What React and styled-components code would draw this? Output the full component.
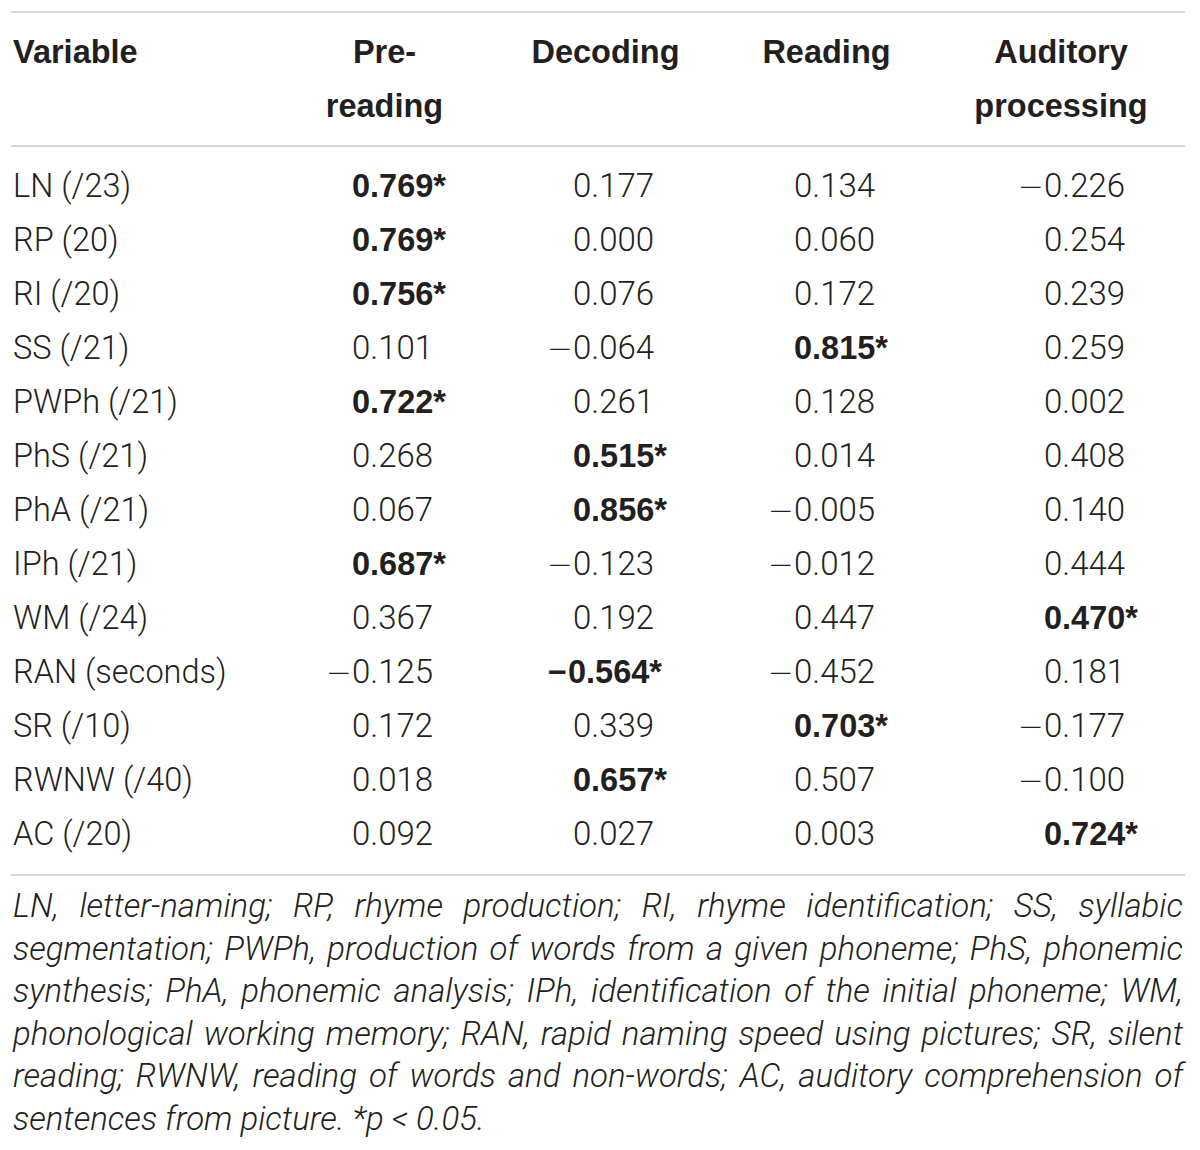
import React from "react";
import styled, { createGlobalStyle } from "styled-components";

const GlobalStyle = createGlobalStyle`
  html, body { margin: 0; padding: 0; background: #ffffff; }
  body { font-family: "Roboto", "Liberation Sans", sans-serif; color: #231f20; }
`;

const Page = styled.div`
  width: 1174px;
  padding: 11px 15px 0 11px;
`;

const Grid = styled.div`
  display: grid;
  grid-template-columns: 263px 221px 221px 221px 248px;
`;

const Header = styled(Grid)`
  border-top: 2px solid #d6d6d6;
  border-bottom: 2px solid #d6d6d6;
  padding: 12px 0 12px;
`;

const HeadCell = styled.div`
  font-family: "Liberation Sans", Arial, sans-serif;
  font-weight: 700;
  font-size: 32.5px;
  line-height: 54px;
  text-align: ${(p) => (p.$left ? "left" : "center")};
  padding-left: ${(p) => (p.$left ? "2px" : "0")};
`;

const Body = styled.div`
  padding: 12px 0 13px;
  border-bottom: 2px solid #d6d6d6;
`;

const Row = styled(Grid)`
  height: 54px;
  align-items: center;
`;

const NameCell = styled.div`
  font-weight: 300;
  font-size: 32.5px;
  line-height: 54px;
  padding-left: 2px;
  white-space: nowrap;
`;

const NumCell = styled.div`
  display: flex;
  align-items: baseline;
  font-size: ${(p) => (p.$bold ? "32.5px" : "33px")};
  line-height: 54px;
  padding-left: ${(p) => p.$pad}px;
  font-weight: ${(p) => (p.$bold ? 700 : 300)};
  font-family: ${(p) =>
    p.$bold ? `"Liberation Sans", Arial, sans-serif` : `"Roboto", "Liberation Sans", sans-serif`};
  white-space: nowrap;
`;

const Sign = styled.span`
  display: inline-block;
  width: ${(p) => (p.$bold && p.$neg ? "20px" : "24px")};
  text-align: left;
  font-family: ${(p) =>
    p.$bold ? `"Liberation Sans", Arial, sans-serif` : `"DejaVu Sans", sans-serif`};
  font-weight: ${(p) => (p.$bold ? 700 : 200)};
  font-size: ${(p) => (p.$bold ? "32.5px" : "31px")};
  margin-left: ${(p) => (p.$bold ? (p.$neg ? "-1px" : "0") : "-2px")};
  margin-right: ${(p) => (p.$bold ? "0" : "2px")};
`;

const Caption = styled.div`
  padding: 9px 2px 0 2px;
  font-style: italic;
  font-weight: 300;
  font-size: 33px;
  line-height: 42.6px;
`;

const CaptionLine = styled.div`
  white-space: nowrap;
  text-align: ${(p) => (p.$last ? "left" : "justify")};
  text-align-last: ${(p) => (p.$last ? "left" : "justify")};
`;

const rows = [
  ["LN (/23)", "0.769*", "0.177", "0.134", "−0.226"],
  ["RP (20)", "0.769*", "0.000", "0.060", "0.254"],
  ["RI (/20)", "0.756*", "0.076", "0.172", "0.239"],
  ["SS (/21)", "0.101", "−0.064", "0.815*", "0.259"],
  ["PWPh (/21)", "0.722*", "0.261", "0.128", "0.002"],
  ["PhS (/21)", "0.268", "0.515*", "0.014", "0.408"],
  ["PhA (/21)", "0.067", "0.856*", "−0.005", "0.140"],
  ["IPh (/21)", "0.687*", "−0.123", "−0.012", "0.444"],
  ["WM (/24)", "0.367", "0.192", "0.447", "0.470*"],
  ["RAN (seconds)", "−0.125", "−0.564*", "−0.452", "0.181"],
  ["SR (/10)", "0.172", "0.339", "0.703*", "−0.177"],
  ["RWNW (/40)", "0.018", "0.657*", "0.507", "−0.100"],
  ["AC (/20)", "0.092", "0.027", "0.003", "0.724*"],
];

const pads = [54, 54, 54, 83];

const captionLines = [
  "LN, letter-naming; RP, rhyme production; RI, rhyme identification; SS, syllabic",
  "segmentation; PWPh, production of words from a given phoneme; PhS, phonemic",
  "synthesis; PhA, phonemic analysis; IPh, identification of the initial phoneme; WM,",
  "phonological working memory; RAN, rapid naming speed using pictures; SR, silent",
  "reading; RWNW, reading of words and non-words; AC, auditory comprehension of",
];

function Num({ value, pad }) {
  const bold = value.endsWith("*");
  const neg = value.startsWith("−");
  const body = neg ? value.slice(1) : value;
  return (
    <NumCell $pad={pad} $bold={bold}>
      <Sign $bold={bold} $neg={neg}>{neg ? "−" : ""}</Sign>
      <span>{body}</span>
    </NumCell>
  );
}

export default function App() {
  return (
    <Page>
      <GlobalStyle />
      <Header>
        <HeadCell $left>Variable</HeadCell>
        <HeadCell>
          Pre-
          <br />
          reading
        </HeadCell>
        <HeadCell>Decoding</HeadCell>
        <HeadCell>Reading</HeadCell>
        <HeadCell>
          Auditory
          <br />
          processing
        </HeadCell>
      </Header>
      <Body>
        {rows.map((r) => (
          <Row key={r[0]}>
            <NameCell>{r[0]}</NameCell>
            {r.slice(1).map((v, i) => (
              <Num key={i} value={v} pad={pads[i]} />
            ))}
          </Row>
        ))}
      </Body>
      <Caption>
        {captionLines.map((l) => (
          <CaptionLine key={l}>{l}</CaptionLine>
        ))}
        <CaptionLine $last>
          sentences from picture. *<i>p</i> &lt; 0.05.
        </CaptionLine>
      </Caption>
    </Page>
  );
}
